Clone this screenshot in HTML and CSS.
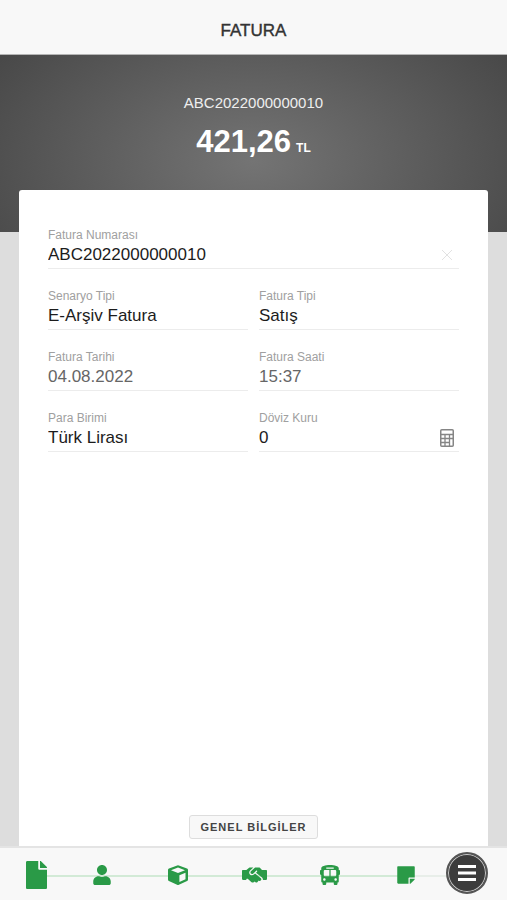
FILE: index.html
```html
<!DOCTYPE html>
<html lang="tr">
<head>
    <meta charset="UTF-8">
    <meta name="viewport" content="width=device-width, initial-scale=1.0">
    <title>Fatura</title>
    <link rel="stylesheet" href="styles.css">
</head>
<body>
    <header class="header">
        <h1>FATURA</h1>
    </header>

    <section class="summary">
        <p class="summary-no">ABC2022000000010</p>
        <p class="summary-total"><span>421,26</span><span class="currency">TL</span></p>
    </section>

    <main class="content">
        <form class="card">
            <div class="fields">
                <div class="field field-wide">
                    <label for="invoice-no">Fatura Numarası</label>
                    <div class="control">
                        <input type="text" id="invoice-no" value="ABC2022000000010">
                        <button type="button" class="icon-btn clear" aria-label="Temizle">
                            <svg width="12" height="12" viewBox="0 0 12 12"><path d="M1 1L11 11M11 1L1 11" stroke="currentColor" fill="none"/></svg>
                        </button>
                    </div>
                </div>
                <div class="field">
                    <label for="scenario">Senaryo Tipi</label>
                    <div class="control">
                        <select id="scenario"><option>E-Arşiv Fatura</option></select>
                    </div>
                </div>
                <div class="field">
                    <label for="invoice-type">Fatura Tipi</label>
                    <div class="control">
                        <select id="invoice-type"><option>Satış</option></select>
                    </div>
                </div>
                <div class="field muted">
                    <label for="invoice-date">Fatura Tarihi</label>
                    <div class="control">
                        <input type="text" id="invoice-date" value="04.08.2022">
                    </div>
                </div>
                <div class="field muted">
                    <label for="invoice-time">Fatura Saati</label>
                    <div class="control">
                        <input type="text" id="invoice-time" value="15:37">
                    </div>
                </div>
                <div class="field">
                    <label for="money">Para Birimi</label>
                    <div class="control">
                        <select id="money"><option>Türk Lirası</option></select>
                    </div>
                </div>
                <div class="field">
                    <label for="rate">Döviz Kuru</label>
                    <div class="control">
                        <input type="text" id="rate" value="0">
                        <button type="button" class="icon-btn calc" aria-label="Hesapla">
                            <svg width="14" height="18" viewBox="0 0 14 18" fill="none" stroke="currentColor">
                                <rect x="0.75" y="0.75" width="12.5" height="16.5" rx="1" stroke-width="1.5"/>
                                <path d="M1 5.5H13M1 9.5H13M1 13.5H9.5M5 5.5V17M9.5 5.5V17" stroke-width="1.3"/>
                            </svg>
                        </button>
                    </div>
                </div>
            </div>
            <button type="button" class="section-btn">GENEL BİLGİLER</button>
        </form>
    </main>

    <nav class="steps">
        <a href="#" class="step first" aria-label="Genel bilgiler">
            <svg width="21" height="28" viewBox="0 0 384 512"><path d="M224 136V0H24C10.700 0 0 10.700 0 24v464c0 13.300 10.700 24 24 24h336c13.300 0 24-10.700 24-24V160H248c-13.200 0-24-10.800-24-24zm160-14.100v6.100H256V0h6.100c6.400 0 12.500 2.500 17 7l97.900 98c4.500 4.500 7 10.600 7 16.900z"/></svg>
        </a>
        <a href="#" class="step" aria-label="Alıcı">
            <svg width="18" height="20" viewBox="0 0 448 512"><path d="M224 256c70.700 0 128-57.300 128-128S294.700 0 224 0 96 57.300 96 128s57.300 128 128 128zm89.600 32h-16.700c-22.200 10.200-46.900 16-72.900 16s-50.600-5.800-72.900-16h-16.700C60.200 288 0 348.200 0 422.400V464c0 26.500 21.500 48 48 48h352c26.500 0 48-21.500 48-48v-41.600c0-74.200-60.200-134.400-134.400-134.400z"/></svg>
        </a>
        <a href="#" class="step" aria-label="Ürünler">
            <svg width="20" height="20" viewBox="0 0 20 20">
                <path d="M9.200 0.400Q10 0.100 10.800 0.400L19 3.400Q20 3.800 20 4.900V14.600Q20 15.700 19.100 16.100L10.900 19.700Q10 20.100 9.100 19.700L0.900 16.100Q0 15.700 0 14.600V4.900Q0 3.800 1 3.400Z"/>
                <path class="face" d="M10 2.600L17 5.200L10 8L3 5.200ZM11.400 10.200L17.500 7.700V14.200L11.400 16.900Z"/>
            </svg>
        </a>
        <a href="#" class="step" aria-label="İskonto">
            <svg width="25" height="20" viewBox="0 0 640 512"><path d="M434.700 64h-85.900c-8 0-15.700 3-21.600 8.400l-98.300 90c-.1.1-.2.3-.3.4-16.600 15.600-16.300 40.500-2.100 56 12.700 13.900 39.400 17.600 56.100 2.700.1-.1.3-.1.4-.2l79.900-73.200c6.500-5.900 16.700-5.500 22.600 1 6 6.500 5.500 16.600-1 22.600l-26.100 23.900L504 313.800c2.900 2.400 5.500 5 7.900 7.700L540 352V128h-28l-54.700-54.600c-5.900-6-14.100-9.400-22.600-9.400zM528 128.200v223.900c0 17.700 14.300 32 32 32h56c13 0 24-11 24-24V152c0-13-11-23.800-24-23.800zM24 384h56c17.700 0 40-14.300 40-32V128.200H24C11 128.200 0 139 0 152v208c0 13 11 24 24 24zm459.900-45.300L334.600 217.500l-30 27.500c-29.700 27.100-75.200 24.500-101.700-4.400-26.900-29.400-24.800-74.900 4.400-101.700L289.100 64h-83.800c-8.500 0-16.600 3.400-22.600 9.400L112 128v223.900h34.300l90.500 81.900c27.400 22.300 67.700 18.100 90-9.300l.2-.2 17.900 15.500c15.900 13 39.400 10.500 52.300-5.400l31.400-38.600 5.400 4.400c13.700 11.100 33.900 9.100 45-4.700l9.500-11.700c11.200-13.800 9.100-33.900-4.600-45.100z"/></svg>
        </a>
        <a href="#" class="step" aria-label="Sevkiyat">
            <svg width="20" height="20" viewBox="0 0 512 512"><path d="M488 128h-8V80c0-44.800-99.200-80-224-80S32 35.200 32 80v48h-8c-13.250 0-24 10.740-24 24v80c0 13.250 10.750 24 24 24h8v160c0 17.670 14.330 32 32 32v32c0 17.670 14.330 32 32 32h32c17.670 0 32-14.330 32-32v-32h192v32c0 17.670 14.330 32 32 32h32c17.670 0 32-14.330 32-32v-32h6.400c16 0 25.600-12.800 25.600-25.600V256h8c13.250 0 24-10.750 24-24v-80c0-13.260-10.750-24-24-24zM160 72c0-4.420 3.580-8 8-8h176c4.420 0 8 3.580 8 8v16c0 4.420-3.580 8-8 8H168c-4.420 0-8-3.580-8-8V72zm-48 328c-17.670 0-32-14.330-32-32s14.330-32 32-32 32 14.330 32 32-14.330 32-32 32zm128-112H128c-17.670 0-32-14.330-32-32v-96c0-17.670 14.330-32 32-32h112v160zm32 0V128h112c17.670 0 32 14.330 32 32v96c0 17.670-14.330 32-32 32H272zm128 112c-17.670 0-32-14.330-32-32s14.330-32 32-32 32 14.330 32 32-14.330 32-32 32z"/></svg>
        </a>
        <a href="#" class="step" aria-label="Notlar">
            <svg width="18" height="20" viewBox="0 0 448 512"><path d="M312 320h136V56c0-13.300-10.700-24-24-24H24C10.700 32 0 42.700 0 56v400c0 13.300 10.700 24 24 24h264V344c0-13.200 10.800-24 24-24zm129 55l-98 98c-4.500 4.500-10.600 7-17 7h-6V352h128v6.100c0 6.300-2.500 12.400-7 16.900z"/></svg>
        </a>
        <button type="button" class="menu-btn" aria-label="Menü">
            <svg width="18" height="16" viewBox="0 0 18 16"><path d="M0 1.500H18M0 8H18M0 14.500H18" stroke="currentColor" stroke-width="3"/></svg>
        </button>
    </nav>
</body>
</html>
```

FILE: styles.css
```css
* {
    box-sizing: border-box;
}
body {
    margin: 0;
    min-height: 100vh;
    display: flex;
    flex-direction: column;
    background: #ddd;
    font-family: "Liberation Sans", Arial, sans-serif;
    color: #222;
}
.header {
    padding: 21px 0 13px;
    background: #f8f8f8;
    border-bottom: 1px solid #b5b5b5;
    text-align: center;
}
.header h1 {
    margin: 0;
    font-size: 17px;
    line-height: 20px;
    font-weight: normal;
    color: #333;
    -webkit-text-stroke: 0.4px #333;
}
.summary {
    padding: 38px 0 72px;
    background: radial-gradient(75% 130% at 50% 60%, #747474, #3e3e3e);
    color: #fff;
    text-align: center;
}
.summary p {
    margin: 0;
}
.summary-no {
    font-size: 15px;
    line-height: 20px;
    color: #eee;
}
.summary .summary-total {
    display: flex;
    justify-content: center;
    align-items: baseline;
    gap: 5px;
    margin-top: 10px;
    font-size: 31px;
    line-height: 37px;
    font-weight: bold;
}
.currency {
    font-size: 12px;
    line-height: 14px;
}
.content {
    flex: 1;
    display: flex;
    margin-top: -42px;
    padding: 0 19px;
}
.card {
    flex: 1;
    display: flex;
    flex-direction: column;
    justify-content: space-between;
    align-items: center;
    padding: 37px 29px 7px;
    background: #fff;
    border-radius: 3px 3px 0 0;
}
.fields {
    width: 100%;
    display: grid;
    grid-template-columns: 1fr 1fr;
    gap: 19px 11px;
}
.field {
    min-width: 0;
    border-bottom: 1px solid #ececec;
}
.field-wide {
    grid-column: 1 / -1;
}
.field label {
    display: block;
    font-size: 12px;
    line-height: 16px;
    color: #a0a0a0;
}
.control {
    display: flex;
    align-items: center;
    height: 25px;
    padding-bottom: 1px;
}
.control input,
.control select {
    flex: 1;
    min-width: 0;
    height: 22px;
    margin: 0;
    padding: 0;
    border: none;
    outline: none;
    background: none;
    appearance: none;
    font-family: inherit;
    font-size: 17px;
    line-height: 22px;
    color: #1c1c1c;
}
.muted .control input {
    color: #666;
}
.icon-btn {
    display: flex;
    padding: 0;
    border: none;
    background: none;
    cursor: pointer;
}
.clear {
    margin-right: 6px;
    color: #e2e2e2;
}
.calc {
    margin-right: 5px;
    color: #858585;
}
.section-btn {
    padding: 4px 10px;
    border: 1px solid #ddd;
    border-radius: 3px;
    background: #f8f8f8;
    font-family: inherit;
    font-size: 11px;
    line-height: 14px;
    font-weight: bold;
    letter-spacing: 1px;
    color: #444;
}
.steps {
    position: relative;
    display: flex;
    align-items: center;
    padding: 2px 19px 0 8px;
    height: 54px;
    background: #f8f8f8;
    border-top: 2px solid #e4e4e4;
}
/* line that joins the steps */
.steps::before {
    content: "";
    position: absolute;
    left: 46px;
    right: 60px;
    top: 27px;
    height: 2px;
    background: linear-gradient(90deg, #d2ead6 90%, #e8eee9 91%);
}
.step {
    position: relative;
    flex: 1;
    display: flex;
    justify-content: center;
    fill: #2a9a47;
}
.first {
    flex: none;
    width: 56px;
}
.face {
    fill: #f8f8f8;
}
.menu-btn {
    position: relative;
    display: flex;
    justify-content: center;
    align-items: center;
    width: 42px;
    height: 42px;
    margin: -4px 0 0 2px;
    padding: 0;
    border: 2px solid #555;
    border-radius: 50%;
    background: #3c3c3c;
    box-shadow: inset 0 0 0 1px #ccc;
    color: #fff;
}
```
